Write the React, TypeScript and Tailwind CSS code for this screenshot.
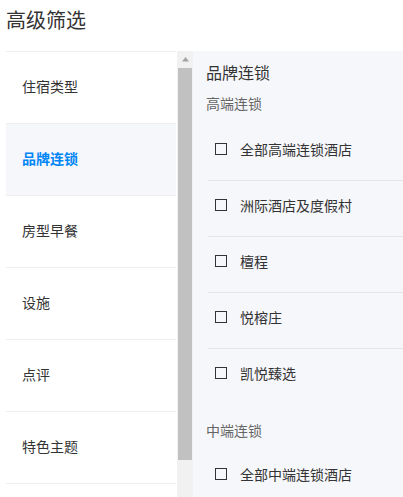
import React from "react";

const leftItems = ["住宿类型", "品牌连锁", "房型早餐", "设施", "点评", "特色主题"];
const high = ["全部高端连锁酒店", "洲际酒店及度假村", "檀程", "悦榕庄", "凯悦臻选"];
const mid = ["全部中端连锁酒店"];

function Row({ label, last }: { label: string; last?: boolean }) {
  return (
    <div
      className={`h-[56px] shrink-0 flex items-center pl-[7px] pb-[8px] ${
        last ? "" : "border-b border-[#e4e5e9]"
      }`}
    >
      <div className="w-[12px] h-[12px] border-[1.5px] border-[#333] shrink-0" />
      <span className="ml-[13px] text-[14px] leading-[20px] text-[#333]">{label}</span>
    </div>
  );
}

export default function App() {
  return (
    <div
      className="w-[403px] h-[497px] overflow-hidden bg-white flex flex-col"
      style={{ fontFamily: '"Noto Sans CJK SC", "Noto Sans", sans-serif' }}
    >
      <div className="h-[51px] shrink-0 pl-[6px] pb-[12px] flex items-center text-[20px] leading-[26px] text-[#333]">
        高级筛选
      </div>
      <div className="flex flex-1 min-h-0">
        <div className="ml-[6px] w-[170px] shrink-0 border-t border-[#eeeeee] flex flex-col">
          {leftItems.map((t, i) => (
            <div
              key={t}
              className={`h-[72px] shrink-0 border-b border-[#eeeeee] flex items-center pl-[16px] pb-[3px] text-[14px] leading-[20px] ${
                i === 1 ? "bg-[#f5f7fb] text-[#0086f6] font-semibold" : "text-[#333]"
              }`}
            >
              {t}
            </div>
          ))}
        </div>
        <div className="ml-[1px] w-[16px] shrink-0 bg-[#f1f1f1] flex flex-col items-center">
          <div className="h-[17px] w-full flex items-center justify-center">
            <svg width="7" height="5" viewBox="0 0 7 5">
              <polygon points="3.5,0 7,4.5 0,4.5" fill="#a3a3a3" />
            </svg>
          </div>
          <div className="w-[14px] h-[392px] bg-[#c1c1c1]" />
        </div>
        <div className="flex-1 bg-[#f6f7fb] flex flex-col pt-[9px]">
          <div className="pl-[13px] text-[16px] leading-[24px] text-[#333]">品牌连锁</div>
          <div className="pl-[13px] mt-[9px] text-[14px] leading-[20px] text-[#666]">高端连锁</div>
          <div className="ml-[15px] mt-[12px] flex flex-col">
            {high.map((t, i) => (
              <Row key={t} label={t} last={i === high.length - 1} />
            ))}
          </div>
          <div className="pl-[13px] mt-[15px] text-[14px] leading-[20px] text-[#666]">中端连锁</div>
          <div className="ml-[15px] mt-[10px] flex flex-col">
            {mid.map((t, i) => (
              <Row key={t} label={t} last={i === mid.length - 1} />
            ))}
          </div>
        </div>
      </div>
    </div>
  );
}
